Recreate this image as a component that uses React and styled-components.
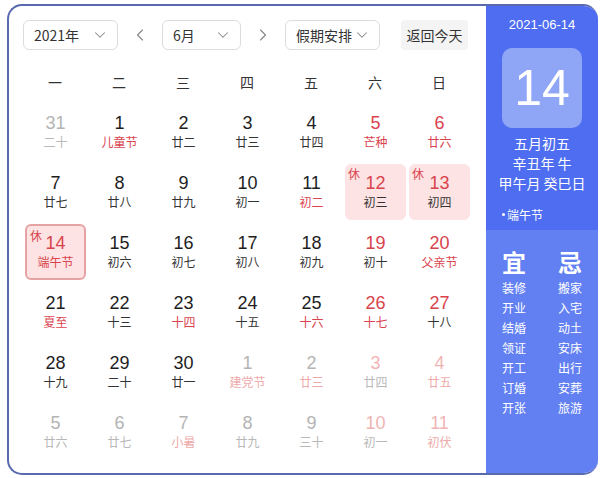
import React from 'react'
import styled, { createGlobalStyle } from 'styled-components'
import { ChevronDown, ChevronLeft, ChevronRight } from 'lucide-react'

const Global = createGlobalStyle`
  html, body { margin: 0; padding: 0; background: #fff; }
  body { font-family: "Liberation Sans", "Noto Sans CJK SC", sans-serif; }
`

const weekdays = ['一', '二', '三', '四', '五', '六', '日']

// n: number, l: lunar, o: other month, w: weekend, r: lunar red, rest: 休, sel: selected
const days = [
  { n: 31, l: '二十', o: 1 }, { n: 1, l: '儿童节', r: 1 }, { n: 2, l: '廿二' }, { n: 3, l: '廿三' },
  { n: 4, l: '廿四' }, { n: 5, l: '芒种', w: 1, r: 1 }, { n: 6, l: '廿六', w: 1, r: 1 },
  { n: 7, l: '廿七' }, { n: 8, l: '廿八' }, { n: 9, l: '廿九' }, { n: 10, l: '初一' },
  { n: 11, l: '初二', r: 1 }, { n: 12, l: '初三', w: 1, rest: 1 }, { n: 13, l: '初四', w: 1, rest: 1 },
  { n: 14, l: '端午节', w: 1, r: 1, rest: 1, sel: 1 }, { n: 15, l: '初六' }, { n: 16, l: '初七' },
  { n: 17, l: '初八' }, { n: 18, l: '初九' }, { n: 19, l: '初十', w: 1 }, { n: 20, l: '父亲节', w: 1, r: 1 },
  { n: 21, l: '夏至', r: 1 }, { n: 22, l: '十三' }, { n: 23, l: '十四', r: 1 }, { n: 24, l: '十五' },
  { n: 25, l: '十六', r: 1 }, { n: 26, l: '十七', w: 1, r: 1 }, { n: 27, l: '十八', w: 1 },
  { n: 28, l: '十九' }, { n: 29, l: '二十' }, { n: 30, l: '廿一' }, { n: 1, l: '建党节', o: 1, r: 1 },
  { n: 2, l: '廿三', o: 1, r: 1 }, { n: 3, l: '廿四', o: 1, w: 1 }, { n: 4, l: '廿五', o: 1, w: 1, r: 1 },
  { n: 5, l: '廿六', o: 1 }, { n: 6, l: '廿七', o: 1 }, { n: 7, l: '小暑', o: 1, r: 1 },
  { n: 8, l: '廿九', o: 1 }, { n: 9, l: '三十', o: 1 }, { n: 10, l: '初一', o: 1, w: 1 },
  { n: 11, l: '初伏', o: 1, w: 1, r: 1 },
]

const yi = ['装修', '开业', '结婚', '领证', '开工', '订婚', '开张']
const ji = ['搬家', '入宅', '动土', '安床', '出行', '安葬', '旅游']

const numColor = (d) => {
  if (d.o) return d.w ? '#f0b4b4' : '#b4b4b4'
  return d.w ? '#d9434d' : '#1e1e1e'
}
const lunarColor = (d) => {
  if (d.o) return d.r ? '#eeaaaa' : '#b8b8b8'
  return d.r ? '#d9434d' : '#333'
}

const App = () => {
  return (
    <>
      <Global />
      <Frame>
        <Main>
          <Toolbar>
            <Select width={95}>2021年<ChevronDown size={18} strokeWidth={1.4} color="#888" /></Select>
            <ArrowBtn><ChevronLeft size={20} strokeWidth={1.4} color="#888" /></ArrowBtn>
            <Select width={79}>6月<ChevronDown size={18} strokeWidth={1.4} color="#888" /></Select>
            <ArrowBtn><ChevronRight size={20} strokeWidth={1.4} color="#888" /></ArrowBtn>
            <Select width={95}>假期安排<ChevronDown size={18} strokeWidth={1.4} color="#888" /></Select>
            <TodayBtn>返回今天</TodayBtn>
          </Toolbar>
          <Grid>
            {weekdays.map((w) => <Weekday key={w}>{w}</Weekday>)}
            {days.map((d, i) => (
              <Cell key={i}>
                <DayBox rest={d.rest} sel={d.sel}>
                  {d.rest ? <Rest>休</Rest> : null}
                  <Num color={numColor(d)}>{d.n}</Num>
                  <Lunar color={lunarColor(d)}>{d.l}</Lunar>
                </DayBox>
              </Cell>
            ))}
          </Grid>
        </Main>
        <Side>
          <SideTop>
            <DateText>2021-06-14</DateText>
            <BigDay>14</BigDay>
            <LunarLines>
              <div>五月初五</div>
              <div>辛丑年 牛</div>
              <div>甲午月 癸巳日</div>
            </LunarLines>
            <Festival><Dot />端午节</Festival>
          </SideTop>
          <SideBottom>
            <Column>
              <Big>宜</Big>
              {yi.map((t) => <Item key={t}>{t}</Item>)}
            </Column>
            <Column>
              <Big>忌</Big>
              {ji.map((t) => <Item key={t}>{t}</Item>)}
            </Column>
          </SideBottom>
        </Side>
      </Frame>
    </>
  )
}

export default App

// styling
const Frame = styled.div`
  display: flex;
  margin: 4px 2px 0 7px;
  width: 591px;
  height: 471px;
  box-sizing: border-box;
  border: 2px solid #5a6aae;
  border-right: none;
  border-radius: 15px;
  overflow: hidden;
  background: #fff;
`

const Main = styled.div`
  flex: 1;
  padding: 14px 0 0 14px;
`

const Toolbar = styled.div`
  display: flex;
  align-items: center;
  height: 30px;
`

const Select = styled.div`
  display: flex;
  align-items: center;
  justify-content: space-between;
  box-sizing: border-box;
  width: ${props => props.width}px;
  height: 30px;
  padding: 0 8px 0 10px;
  border: 1px solid #dcdcdc;
  border-radius: 6px;
  font-size: 14px;
  color: #333;
  font-family: "Noto Sans CJK SC", sans-serif;
`

const ArrowBtn = styled.div`
  width: 44px;
  display: flex;
  align-items: center;
  justify-content: center;
`

const TodayBtn = styled.div`
  margin-left: 21px;
  width: 67px;
  height: 30px;
  display: flex;
  align-items: center;
  justify-content: center;
  background: #f4f4f4;
  border-radius: 4px;
  font-size: 14px;
  color: #333;
  font-family: "Noto Sans CJK SC", sans-serif;
`

const Grid = styled.div`
  display: grid;
  grid-template-columns: repeat(7, 64px);
  grid-template-rows: 40px repeat(6, 60px);
  margin-top: 12px;
`

const Weekday = styled.div`
  display: flex;
  align-items: center;
  justify-content: center;
  font-size: 14px;
  color: #333;
  font-family: "Noto Sans CJK SC", sans-serif;
`

const Cell = styled.div`
  padding: 2px 1px 2px 2px;
  display: flex;
`

const DayBox = styled.div`
  position: relative;
  flex: 1;
  display: flex;
  flex-direction: column;
  align-items: center;
  justify-content: center;
  border-radius: 6px;
  box-sizing: border-box;
  background: ${props => (props.rest ? '#fde3e3' : 'transparent')};
  border: ${props => (props.sel ? '2px solid #e6a3a3' : 'none')};
`

const Rest = styled.span`
  position: absolute;
  top: 1px;
  left: 3px;
  font-size: 12px;
  color: #d9434d;
  font-family: "Noto Sans CJK SC", sans-serif;
`

const Num = styled.div`
  font-size: 18px;
  line-height: 20px;
  color: ${props => props.color};
`

const Lunar = styled.div`
  font-size: 12px;
  line-height: 18px;
  color: ${props => props.color};
  font-family: "Noto Sans CJK SC", sans-serif;
`

const Side = styled.div`
  width: 112px;
  display: flex;
  flex-direction: column;
  color: #fff;
  font-family: "Noto Sans CJK SC", sans-serif;
`

const SideTop = styled.div`
  height: 224px;
  background: #4e6df0;
  display: flex;
  flex-direction: column;
  align-items: center;
  padding-top: 11px;
  box-sizing: border-box;
`

const DateText = styled.div`
  font-family: "Liberation Sans", sans-serif;
  font-size: 13px;
  line-height: 16px;
`

const BigDay = styled.div`
  margin-top: 15px;
  width: 80px;
  height: 80px;
  border-radius: 10px;
  background: #8fa5f6;
  display: flex;
  align-items: center;
  justify-content: center;
  font-family: "Liberation Sans", sans-serif;
  font-size: 50px;
`

const LunarLines = styled.div`
  margin-top: 5px;
  font-size: 14px;
  line-height: 20px;
  text-align: center;
`

const Festival = styled.div`
  align-self: flex-start;
  display: flex;
  align-items: center;
  margin: 13px 0 0 16px;
  font-size: 12px;
`

const Dot = styled.span`
  width: 3px;
  height: 3px;
  border-radius: 50%;
  background: #fff;
  margin-right: 2px;
`

const SideBottom = styled.div`
  flex: 1;
  background: #6280f2;
  display: grid;
  grid-template-columns: 1fr 1fr;
  padding-top: 17px;
`

const Column = styled.div`
  display: flex;
  flex-direction: column;
  align-items: center;
`

const Big = styled.div`
  font-size: 24px;
  line-height: 30px;
  font-weight: bold;
  margin-bottom: 1px;
`

const Item = styled.div`
  font-size: 12px;
  line-height: 20px;
`
